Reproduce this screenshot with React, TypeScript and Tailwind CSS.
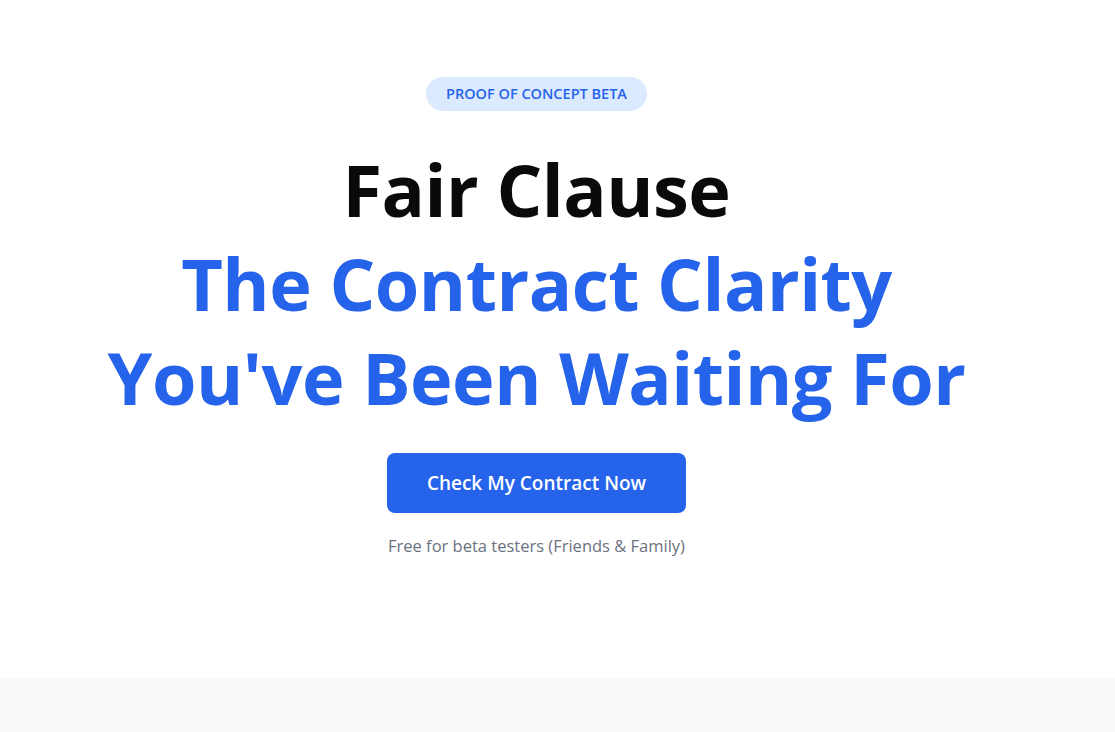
import React from "react";

export default function App() {
  return (
    <div className="min-h-screen bg-white" style={{ fontFamily: '"Open Sans", "Noto Sans", sans-serif' }}>
      <section className="flex flex-col items-center pt-[77px] pr-[42px] h-[678px]">
        <div className="h-[34px] px-5 flex items-center rounded-full bg-[#dbeafe] text-[#2563eb] text-[14.5px] font-semibold uppercase">
          Proof of Concept Beta
        </div>
        <h1 className="mt-[31px] text-center font-bold text-[72px] leading-[94px] tracking-[-0.5px]">
          <span className="block text-[#0a0a0a]">Fair Clause</span>
          <span className="block text-[#2563eb]">The Contract Clarity</span>
          <span className="block text-[#2563eb]">You've Been Waiting For</span>
        </h1>
        <button className="mt-[29px] h-[60px] w-[299px] rounded-lg bg-[#2563eb] text-white text-[19px] font-semibold">
          Check My Contract Now
        </button>
        <p className="mt-[21px] text-[16.5px] leading-6 text-[#6b7280]">Free for beta testers (Friends &amp; Family)</p>
      </section>
      <section className="h-[54px] bg-[#f9fafb]"></section>
    </div>
  );
}
